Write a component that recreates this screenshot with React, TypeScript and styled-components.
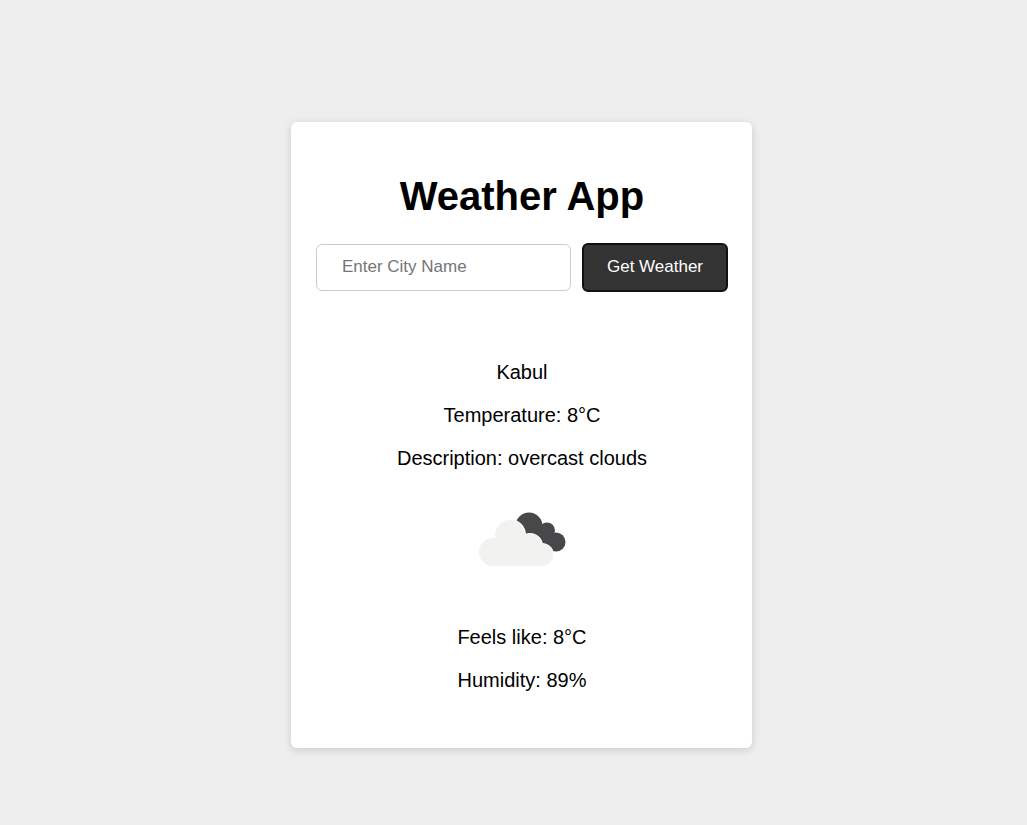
import React, { useState } from "react";
import styled, { createGlobalStyle } from "styled-components";

const GlobalStyle = createGlobalStyle`
  *, *::before, *::after { box-sizing: border-box; }
  body {
    margin: 0;
    background: #eeeeee;
    color: #000000;
    font-family: Arial, "Liberation Sans", sans-serif;
  }
`;

const Page = styled.main`
  display: flex;
  align-items: center;
  justify-content: center;
  min-height: 100vh;
  padding: 45px 0 0 16px;
`;

const Card = styled.section`
  display: flex;
  flex-direction: column;
  align-items: center;
  padding: 51px 24px 56px 25px;
  border-radius: 6px;
  background: #ffffff;
  box-shadow: 0 2px 8px rgba(0, 0, 0, 0.15);
  text-align: center;
`;

const Title = styled.h1`
  margin: 0 0 24px;
  font-size: 40px;
  line-height: 46px;
`;

const SearchForm = styled.form`
  display: flex;
  align-items: center;
  gap: 11px;
`;

const CityInput = styled.input`
  width: 255px;
  height: 47px;
  padding: 0 25px 2px;
  border: 1px solid #cccccc;
  border-radius: 6px;
  background: #ffffff;
  font-family: inherit;
  font-size: 17px;

  &::placeholder {
    color: #757575;
  }
`;

const SubmitButton = styled.button`
  height: 49px;
  padding: 0 23px 2px;
  border: 2px solid #111111;
  border-radius: 6px;
  background: #333333;
  color: #ffffff;
  font-family: inherit;
  font-size: 17px;
  cursor: pointer;
`;

const Report = styled.div`
  display: flex;
  flex-direction: column;
  align-items: center;
  gap: 20px;
  margin-top: 69px;
`;

const Reading = styled.p`
  margin: 0;
  font-size: 20px;
  line-height: 23px;
`;

const Icon = styled.svg`
  width: 100px;
  height: 100px;
  margin: 8px 0;
`;

function CloudShape() {
  return (
    <>
      <circle cx="23" cy="52" r="14" />
      <circle cx="40" cy="35" r="15" />
      <circle cx="60" cy="46" r="12" />
      <circle cx="72" cy="55" r="11" />
      <path d="M23 42 L30 36 H50 L72 50 V66 H23 Z" />
    </>
  );
}

function OvercastIcon() {
  return (
    <Icon viewBox="2 -2 100 100" role="img" aria-label="overcast clouds">
      <g fill="#48484a">
        <circle cx="59" cy="26" r="13.5" />
        <circle cx="77" cy="30.5" r="8" />
        <circle cx="86" cy="42" r="9.5" />
        <path d="M49 28 L70 24 L80 33 L88 51 H80 L60 48 Z" />
      </g>
      <g fill="#ffffff" stroke="#ffffff" strokeWidth="2">
        <CloudShape />
      </g>
      <g fill="#f2f2f0">
        <CloudShape />
      </g>
    </Icon>
  );
}

export default function App() {
  const [city, setCity] = useState("");

  return (
    <>
      <GlobalStyle />
      <Page>
        <Card>
          <Title>Weather App</Title>
          <SearchForm onSubmit={(event) => event.preventDefault()}>
            <CityInput
              type="text"
              aria-label="City name"
              placeholder="Enter City Name"
              value={city}
              onChange={(event) => setCity(event.target.value)}
            />
            <SubmitButton type="submit">Get Weather</SubmitButton>
          </SearchForm>
          <Report>
            <Reading>Kabul</Reading>
            <Reading>Temperature: 8°C</Reading>
            <Reading>Description: overcast clouds</Reading>
            <OvercastIcon />
            <Reading>Feels like: 8°C</Reading>
            <Reading>Humidity: 89%</Reading>
          </Report>
        </Card>
      </Page>
    </>
  );
}
